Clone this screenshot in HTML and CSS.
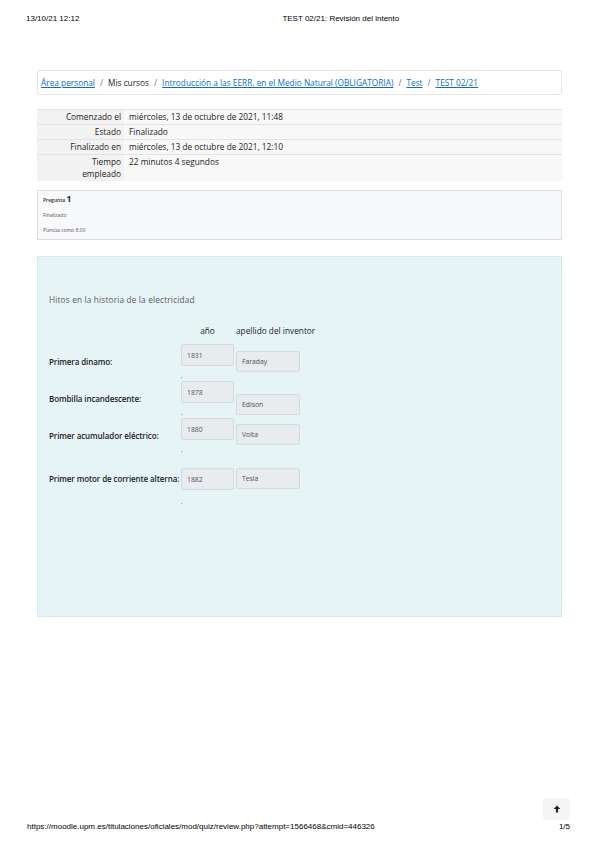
FILE: index.html
```html
<!DOCTYPE html>
<html lang="es">
<head>
<meta charset="utf-8">
<title>TEST 02/21: Revisión del intento</title>
<link rel="stylesheet" href="styles.css">
</head>
<body>
<div class="page">
  <header class="print-head">
    <span class="print-date">13/10/21 12:12</span>
    <span class="print-title">TEST 02/21: Revisión del intento</span>
  </header>

  <main class="main">
    <nav class="crumbs">
      <a href="#">Área personal</a><span class="sep">/</span><span class="crumb-text">Mis cursos</span><span class="sep">/</span><a href="#">Introducción a las EERR. en el Medio Natural (OBLIGATORIA)</a><span class="sep">/</span><a href="#">Test</a><span class="sep">/</span><a href="#">TEST 02/21</a>
    </nav>

    <table class="summary">
      <tr><th>Comenzado el</th><td>miércoles, 13 de octubre de 2021, 11:48</td></tr>
      <tr><th>Estado</th><td>Finalizado</td></tr>
      <tr><th>Finalizado en</th><td>miércoles, 13 de octubre de 2021, 12:10</td></tr>
      <tr><th>Tiempo<br>empleado</th><td>22 minutos 4 segundos</td></tr>
    </table>

    <div class="qinfo">
      <div class="qno">Pregunta <span class="qnum">1</span></div>
      <div class="qstate">Finalizado</div>
      <div class="qgrade">Puntúa como 8.00</div>
    </div>

    <div class="qcontent">
      <p class="qtext">Hitos en la historia de la electricidad</p>
      <div class="qhead">
        <span class="qlabel"></span>
        <span class="qyear qcol-title">año</span>
        <span class="qname qcol-title">apellido del inventor</span>
      </div>

      <div class="qrow">
        <span class="qlabel">Primera dinamo:</span>
        <span class="qyear"><span class="box box-year">1831</span><span class="mark">,</span></span>
        <span class="qname qname-r1"><span class="box box-name">Faraday</span></span>
      </div>
      <div class="qrow">
        <span class="qlabel">Bombilla incandescente:</span>
        <span class="qyear"><span class="box box-year">1878</span><span class="mark">,</span></span>
        <span class="qname qname-r2"><span class="box box-name">Edison</span></span>
      </div>
      <div class="qrow">
        <span class="qlabel">Primer acumulador eléctrico:</span>
        <span class="qyear"><span class="box box-year">1880</span><span class="mark">,</span></span>
        <span class="qname qname-r3"><span class="box box-name">Volta</span></span>
      </div>
      <div class="qrow qrow-last">
        <span class="qlabel">Primer motor de corriente alterna:</span>
        <span class="qyear"><span class="box box-year">1882</span><span class="mark">,</span></span>
        <span class="qname"><span class="box box-name">Tesla</span></span>
      </div>
    </div>
  </main>

  <footer class="print-foot">
    <div class="totop-row">
      <span class="totop" aria-label="Ir arriba">
        <svg width="8" height="8" viewBox="0 0 8 8"><path d="M4 0.6 L7.3 3.9 L5.1 3.9 L5.1 7.4 L2.9 7.4 L2.9 3.9 L0.7 3.9 Z" fill="#1d2125"/></svg>
      </span>
    </div>
    <div class="print-line">
      <span class="print-url">https://moodle.upm.es/titulaciones/oficiales/mod/quiz/review.php?attempt=1566468&amp;cmid=446326</span>
      <span class="print-page">1/5</span>
    </div>
  </footer>
</div>
</body>
</html>
```

FILE: styles.css
```css
* { box-sizing: border-box; }

html, body {
  margin: 0;
  padding: 0;
  background: #fff;
}

body {
  font-family: "Open Sans", "Noto Sans", sans-serif;
  color: #1d2125;
}

.page {
  width: 599px;
  min-height: 848px;
  display: flex;
  flex-direction: column;
}

/* print header */
.print-head {
  display: flex;
  align-items: center;
  padding: 14px 26px 0 26px;
  font-family: "Liberation Sans", Arial, sans-serif;
  font-size: 8px;
  line-height: 10px;
  color: #000;
}
.print-title {
  margin-left: 203px;
}

.main {
  margin: 0 37px;
  display: flex;
  flex-direction: column;
}

/* breadcrumb */
.crumbs {
  margin-top: 46px;
  height: 25px;
  border: 1px solid #e6e6e6;
  border-radius: 3px;
  padding: 0 3px;
  display: flex;
  align-items: center;
  font-size: 8.3px;
  white-space: nowrap;
  box-shadow: 0 0 1px rgba(0,0,0,0.05);
}
.crumbs a {
  color: #0f6cbf;
  text-decoration: underline;
}
.crumb-text { color: #1d2125; }
.sep {
  color: #6a737b;
  margin: 0 5px 0 5px;
}

/* summary table */
.summary {
  margin-top: 14px;
  width: 100%;
  border-collapse: collapse;
  font-size: 8.3px;
  line-height: 12px;
}
.summary th,
.summary td {
  border-top: 1px solid #e3e3e3;
  padding: 1px 4px 1px 4px;
  vertical-align: top;
}
.summary th {
  width: 87px;
  text-align: right;
  font-weight: normal;
  background: #f2f2f2;
  color: #1d2125;
  padding-right: 3px;
}
.summary td {
  background: #f8f8f8;
  padding-left: 5px;
}

/* question info */
.qinfo {
  margin-top: 9px;
  height: 50px;
  border: 1px solid #dcdde0;
  background: #f8f9fa;
  padding: 3px 5px;
  font-size: 5px;
  color: #555;
}
.qno {
  font-weight: 600;
  color: #333;
  line-height: 10px;
}
.qnum {
  font-size: 8.5px;
  font-weight: 700;
  color: #1d2125;
}
.qstate {
  margin-top: 6px;
  line-height: 8px;
}
.qgrade {
  margin-top: 7px;
  line-height: 8px;
}

/* question content */
.qcontent {
  margin-top: 16px;
  height: 361px;
  background: #e7f4f6;
  border: 1px solid #d1e9ef;
  padding: 37px 11px 0 11px;
}
.qtext {
  margin: 0 0 19px 0;
  font-size: 8.3px;
  line-height: 12px;
  color: #5a5a5a;
  letter-spacing: 0.15px;
}
.qhead {
  display: flex;
  font-size: 8.3px;
  line-height: 12px;
  color: #1d2125;
  margin-bottom: 7px;
}
.qcol-title { white-space: nowrap; }
.qhead .qyear { text-align: center; padding-right: 2px; }

.qrow {
  display: flex;
  align-items: flex-start;
}
.qrow-last { margin-top: 13px; }

.qlabel {
  width: 132px;
  flex: none;
  font-size: 8px;
  font-weight: 600;
  line-height: 10px;
  white-space: nowrap;
  letter-spacing: -0.1px;
  margin-top: 13px;
  color: #1d2125;
}
.qhead .qlabel { margin-top: 0; }
.qrow-last .qlabel { margin-top: 6px; }

.qyear {
  width: 55px;
  flex: none;
  display: flex;
  flex-direction: column;
}
.qname {
  width: 64px;
  flex: none;
}
.qname-r1 { margin-top: 7px; }
.qname-r2 { margin-top: 13px; }
.qname-r3 { margin-top: 6px; }

.box {
  display: flex;
  align-items: center;
  background: #e9ecef;
  border: 1px solid #d6d9dc;
  border-radius: 2px;
  padding-left: 5px;
  font-size: 6.8px;
  color: #495057;
}
.box-year {
  width: 53px;
  height: 22px;
}
.box-name {
  width: 64px;
  height: 21px;
}
.mark {
  margin-top: 5px;
  height: 10px;
  line-height: 10px;
  font-size: 6px;
  color: #333;
}
.qrow-last .mark { margin-top: 7px; }

/* footer */
.print-foot {
  margin-top: auto;
  padding: 0 29px 16px 27px;
  font-family: "Liberation Sans", Arial, sans-serif;
}
.totop-row {
  display: flex;
  justify-content: flex-end;
}
.totop {
  width: 27px;
  height: 22px;
  background: #f5f5f5;
  border-radius: 3px;
  display: flex;
  align-items: center;
  justify-content: center;
}
.print-line {
  margin-top: 2px;
  display: flex;
  justify-content: space-between;
  font-size: 8px;
  line-height: 10px;
  color: #000;
}
```
